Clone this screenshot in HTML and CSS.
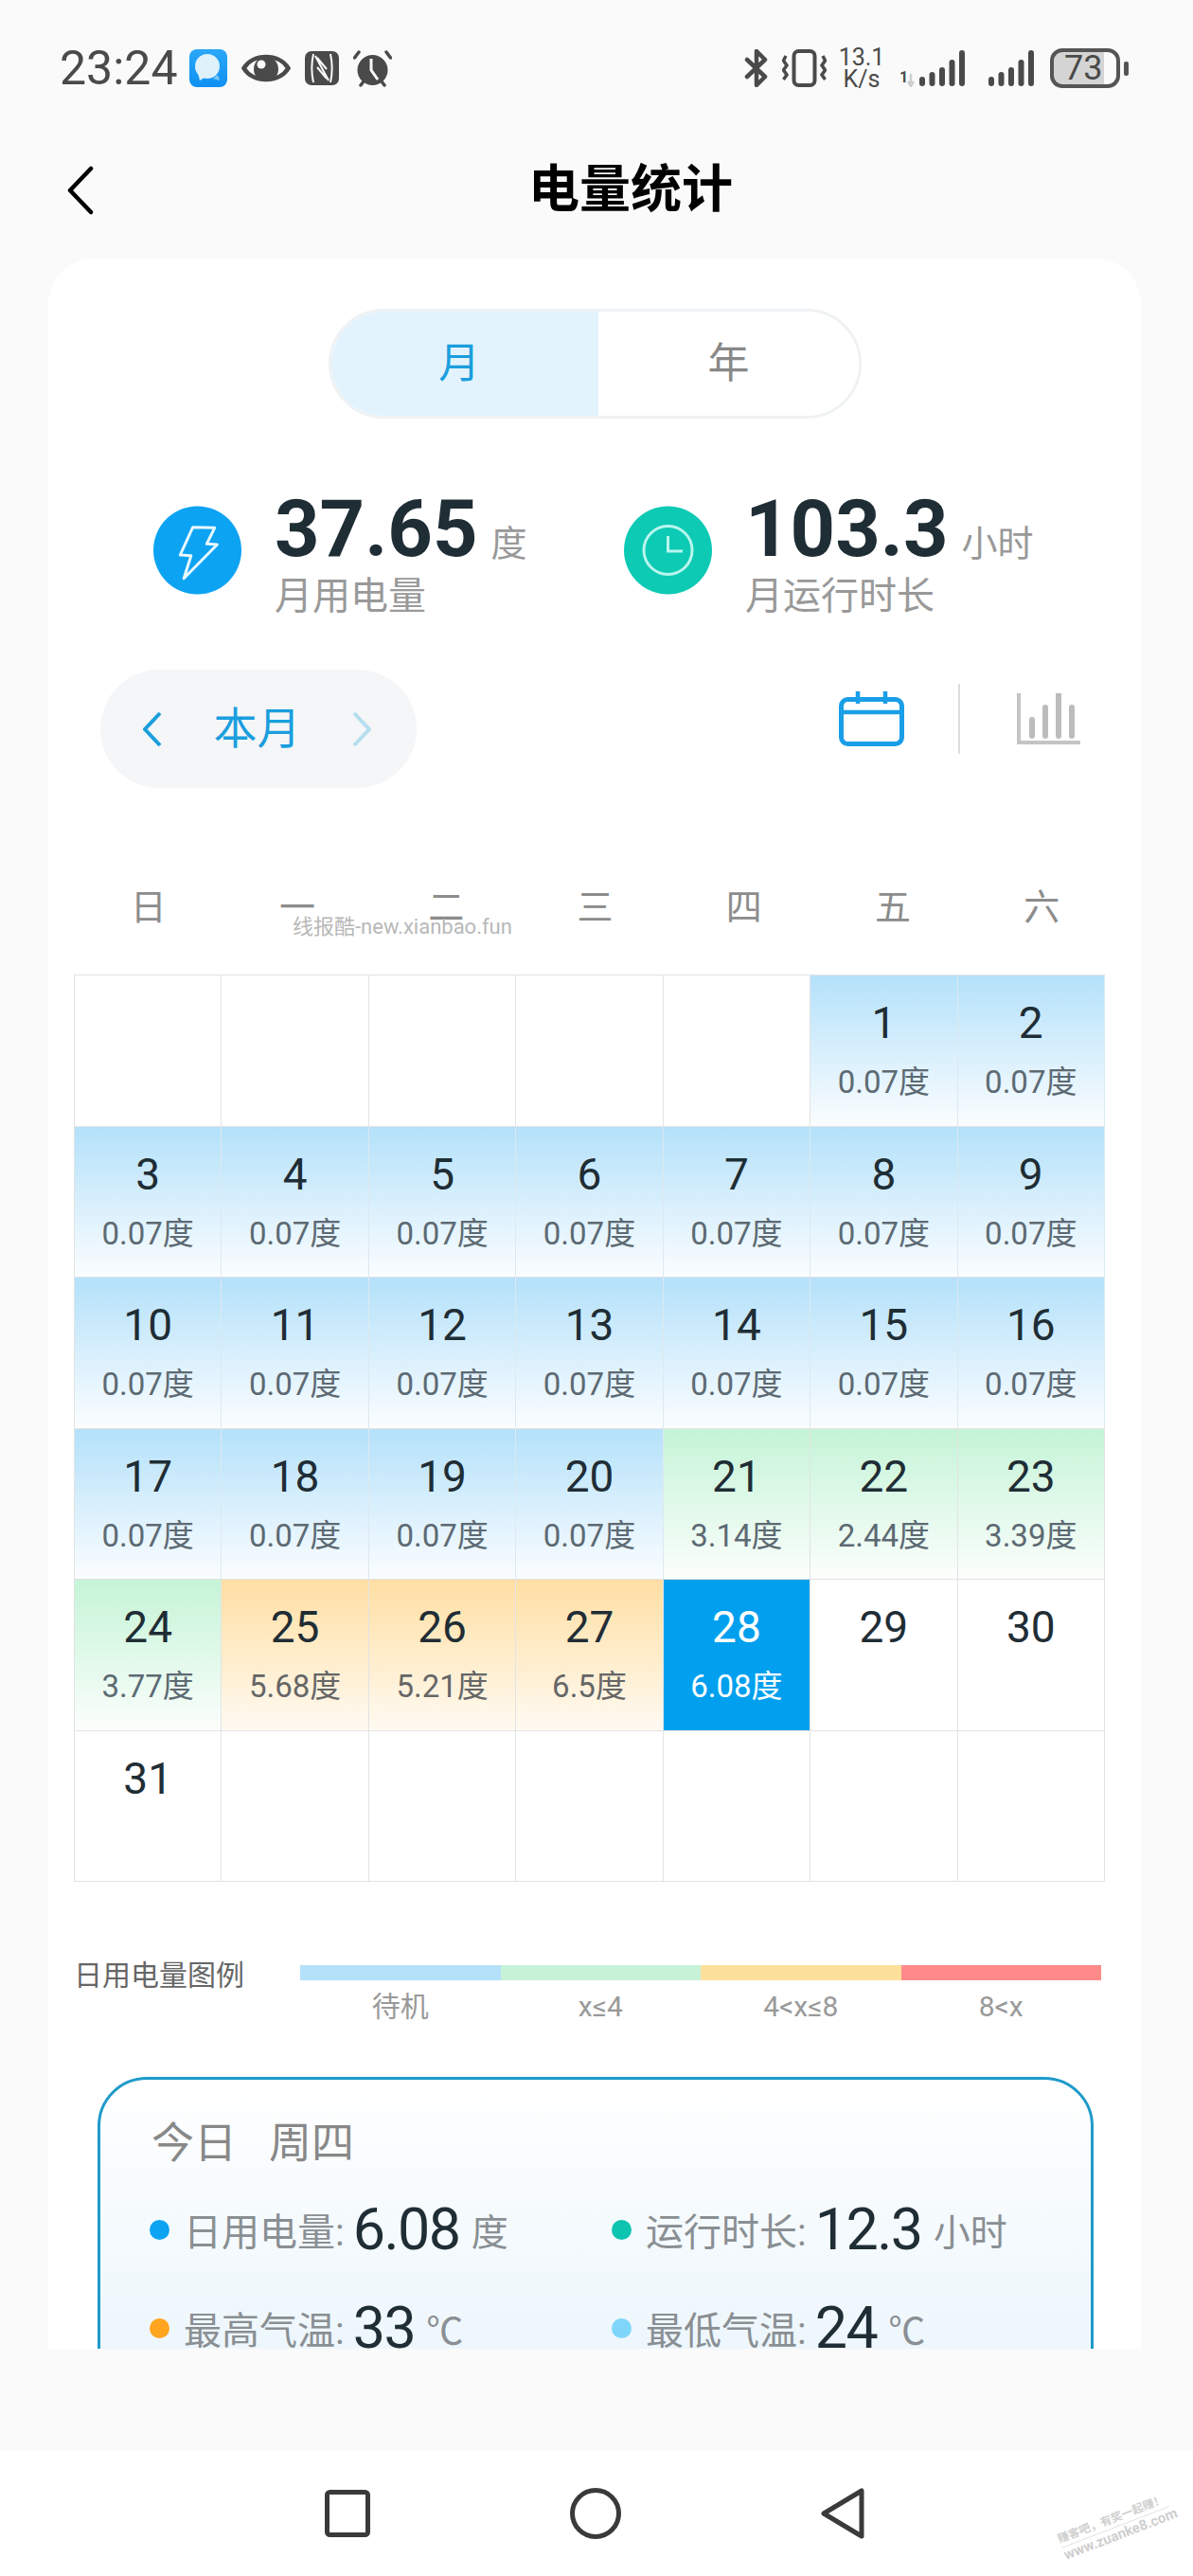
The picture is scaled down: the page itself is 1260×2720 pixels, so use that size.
FILE: index.html
```html
<!DOCTYPE html>
<html lang="zh-CN">
<head>
  <meta charset="utf-8">
  <title>电量统计</title>
  <link rel="stylesheet" href="styles.css">
</head>
<body>
<div class="page">

  <div class="status">
    <div class="status-left">
      <span class="time">23:24</span>
      <svg class="ic" width="40" height="40" viewBox="0 0 40 40">
        <defs>
          <linearGradient id="msgBg" x1="0" y1="0" x2="0" y2="1">
            <stop offset="0" stop-color="#2aa8f8"/>
            <stop offset="1" stop-color="#0e90f2"/>
          </linearGradient>
        </defs>
        <rect width="40" height="40" rx="8" fill="url(#msgBg)"/>
        <circle cx="19" cy="18" r="13" fill="#dff1fb"/>
        <path d="M9 25l2 8 8-5z" fill="#dff1fb"/>
        <path d="M30 27l2 6-7-2z" fill="#7cc8f8"/>
      </svg>
      <svg class="ic" width="52" height="36" viewBox="0 0 52 36">
        <path d="M2.500 18C12 2 40 2 49.500 18C40 34 12 34 2.500 18Z" fill="none" stroke="#4a4a4a" stroke-width="4.500"/>
        <circle cx="26" cy="19" r="13" fill="#4a4a4a"/>
        <circle cx="21" cy="14" r="4.500" fill="#fafafa"/>
      </svg>
      <svg class="ic" width="36" height="36" viewBox="0 0 36 36">
        <rect width="36" height="36" rx="7" fill="#4a4a4a"/>
        <path d="M9 3C7 12 7 24 9 33M27 3C29 12 29 24 27 33M11 5L25 31M13 17L23 29M13 7L23 19" fill="none" stroke="#fafafa" stroke-width="2"/>
      </svg>
      <svg class="ic" width="41" height="39" viewBox="0 0 41 39">
        <path d="M1.500 8L6 2M39.500 8L35 2M8 37L11 33M33 37L30 33" stroke="#4a4a4a" stroke-width="3.500" stroke-linecap="round"/>
        <circle cx="20.500" cy="21" r="16" fill="#4a4a4a"/>
        <path d="M19 9V21L26 31" fill="none" stroke="#fafafa" stroke-width="3"/>
      </svg>
    </div>
    <div class="status-right">
      <svg class="ic" width="25" height="40" viewBox="0 0 25 40">
        <path d="M3 11L22 29L13 38V2L22 11L3 29" fill="none" stroke="#4a4a4a" stroke-width="4.500" stroke-linejoin="round" stroke-linecap="round"/>
      </svg>
      <svg class="ic" width="47" height="40" viewBox="0 0 47 40">
        <rect x="12.500" y="2" width="22" height="36" rx="5" fill="none" stroke="#4a4a4a" stroke-width="4"/>
        <path d="M4 7L1.500 12L5 17L1.500 22L5 27L1.500 32M43 7L45.500 12L42 17L45.500 22L42 27L45.500 32" fill="none" stroke="#4a4a4a" stroke-width="3.500"/>
      </svg>
      <div class="speed"><span>13.1</span><span>K/s</span></div>
      <svg class="ic sig-a" width="70" height="40" viewBox="0 0 70 40">
        <text x="0" y="35" class="sig-num">1</text>
        <path d="M12 26V38M9 34L12 39L15 34" fill="none" stroke="#cfcfcf" stroke-width="2.500"/>
        <rect x="21" y="29" width="6" height="10" rx="3" fill="#4a4a4a"/>
        <rect x="31.500" y="24" width="6" height="15" rx="3" fill="#4a4a4a"/>
        <rect x="42" y="19" width="6" height="20" rx="3" fill="#4a4a4a"/>
        <rect x="52.500" y="11" width="6" height="28" rx="3" fill="#4a4a4a"/>
        <rect x="63" y="1" width="6" height="38" rx="3" fill="#4a4a4a"/>
      </svg>
      <svg class="ic sig-b" width="50" height="40" viewBox="0 0 50 40">
        <rect x="1" y="29" width="6" height="10" rx="3" fill="#4a4a4a"/>
        <rect x="11.500" y="24" width="6" height="15" rx="3" fill="#4a4a4a"/>
        <rect x="22" y="19" width="6" height="20" rx="3" fill="#4a4a4a"/>
        <rect x="32.500" y="11" width="6" height="28" rx="3" fill="#4a4a4a"/>
        <rect x="43" y="1" width="6" height="38" rx="3" fill="#4a4a4a"/>
      </svg>
      <div class="battery">73</div>
      <div class="battery-nub"></div>
    </div>
  </div>

  <div class="topbar">
    <svg class="back" width="28" height="52" viewBox="0 0 28 52">
      <path d="M25 3L3 26L25 49" fill="none" stroke="#000" stroke-width="4.500" stroke-linecap="round" stroke-linejoin="round"/>
    </svg>
    <h1 class="title">电量统计</h1>
  </div>

  <div class="card">
    <div class="seg">
      <div class="seg-item seg-on">月</div>
      <div class="seg-item">年</div>
    </div>

    <div class="stats">
      <div class="stat stat-power">
        <svg class="stat-ic" width="93" height="94" viewBox="0 0 93 94">
          <circle cx="46.500" cy="47" r="46.500" fill="#0ca3f3"/>
          <path d="M41.700 22.700L64.700 23.300L56.300 40.300L67.400 41L32.200 76.700L39.800 52.700L28.300 52Z" fill="none" stroke="#e8f8ff" stroke-width="3" stroke-linejoin="round"/>
        </svg>
        <div>
          <div class="stat-val">37.65<span class="stat-unit">度</span></div>
          <div class="stat-label">月用电量</div>
        </div>
      </div>
      <div class="stat">
        <svg class="stat-ic" width="93" height="94" viewBox="0 0 93 94">
          <circle cx="46.500" cy="47" r="46.500" fill="#0ccab4"/>
          <circle cx="46.500" cy="47" r="25.500" fill="none" stroke="#b9f6ee" stroke-width="3"/>
          <path d="M46.500 32V48H62" fill="none" stroke="#b9f6ee" stroke-width="3"/>
        </svg>
        <div>
          <div class="stat-val">103.3<span class="stat-unit">小时</span></div>
          <div class="stat-label">月运行时长</div>
        </div>
      </div>
    </div>

    <div class="tools">
      <div class="pill">
        <svg width="20" height="38" viewBox="0 0 20 38"><path d="M18 2L2 19L18 36" fill="none" stroke="#1a9ede" stroke-width="4"/></svg>
        <span class="pill-text">本月</span>
        <svg width="20" height="38" viewBox="0 0 20 38"><path d="M2 2L18 19L2 36" fill="none" stroke="#b5dfef" stroke-width="4"/></svg>
      </div>
      <div class="views">
        <svg width="69" height="58" viewBox="0 0 69 58">
          <rect x="2.500" y="8.500" width="64" height="47" rx="7" fill="none" stroke="#1a9ee8" stroke-width="5"/>
          <path d="M2 22H67M20 0V13M49 0V13" fill="none" stroke="#1a9ee8" stroke-width="4.500"/>
        </svg>
        <div class="views-line"></div>
        <svg width="67" height="54" viewBox="0 0 67 54">
          <path d="M2 0V52H67" fill="none" stroke="#c4c4c4" stroke-width="4"/>
          <path d="M16 28V45M30 15V45M44 1V45M58 15V45" fill="none" stroke="#bcbcbc" stroke-width="6" stroke-linecap="round"/>
        </svg>
      </div>
    </div>

    <div class="week">
      <span>日</span><span>一</span><span>二</span><span>三</span><span>四</span><span>五</span><span>六</span>
    </div>

    <div class="cal">
      <div class="day"></div><div class="day"></div><div class="day"></div><div class="day"></div><div class="day"></div>
      <div class="day blue"><b>1</b><i>0.07度</i></div>
      <div class="day blue"><b>2</b><i>0.07度</i></div>
      <div class="day blue"><b>3</b><i>0.07度</i></div>
      <div class="day blue"><b>4</b><i>0.07度</i></div>
      <div class="day blue"><b>5</b><i>0.07度</i></div>
      <div class="day blue"><b>6</b><i>0.07度</i></div>
      <div class="day blue"><b>7</b><i>0.07度</i></div>
      <div class="day blue"><b>8</b><i>0.07度</i></div>
      <div class="day blue"><b>9</b><i>0.07度</i></div>
      <div class="day blue"><b>10</b><i>0.07度</i></div>
      <div class="day blue"><b>11</b><i>0.07度</i></div>
      <div class="day blue"><b>12</b><i>0.07度</i></div>
      <div class="day blue"><b>13</b><i>0.07度</i></div>
      <div class="day blue"><b>14</b><i>0.07度</i></div>
      <div class="day blue"><b>15</b><i>0.07度</i></div>
      <div class="day blue"><b>16</b><i>0.07度</i></div>
      <div class="day blue"><b>17</b><i>0.07度</i></div>
      <div class="day blue"><b>18</b><i>0.07度</i></div>
      <div class="day blue"><b>19</b><i>0.07度</i></div>
      <div class="day blue"><b>20</b><i>0.07度</i></div>
      <div class="day green"><b>21</b><i>3.14度</i></div>
      <div class="day green"><b>22</b><i>2.44度</i></div>
      <div class="day green"><b>23</b><i>3.39度</i></div>
      <div class="day green"><b>24</b><i>3.77度</i></div>
      <div class="day orange"><b>25</b><i>5.68度</i></div>
      <div class="day orange"><b>26</b><i>5.21度</i></div>
      <div class="day orange"><b>27</b><i>6.5度</i></div>
      <div class="day today-cell"><b>28</b><i>6.08度</i></div>
      <div class="day"><b>29</b></div>
      <div class="day"><b>30</b></div>
      <div class="day"><b>31</b></div>
      <div class="day"></div><div class="day"></div><div class="day"></div><div class="day"></div><div class="day"></div><div class="day"></div>
    </div>

    <div class="legend">
      <div class="legend-name">日用电量图例</div>
      <div class="legend-scale">
        <div class="legend-part"><div class="legend-bar lg-blue"></div><span>待机</span></div>
        <div class="legend-part"><div class="legend-bar lg-green"></div><span>x≤4</span></div>
        <div class="legend-part"><div class="legend-bar lg-orange"></div><span>4&lt;x≤8</span></div>
        <div class="legend-part"><div class="legend-bar lg-red"></div><span>8&lt;x</span></div>
      </div>
    </div>

    <div class="today">
      <div class="today-title"><span>今日</span><span>周四</span></div>
      <div class="today-grid">
        <div class="row"><span class="dot dot-blue"></span><span class="row-name">日用电量:</span><span class="row-val">6.08</span><span class="row-unit">度</span></div>
        <div class="row"><span class="dot dot-teal"></span><span class="row-name">运行时长:</span><span class="row-val">12.3</span><span class="row-unit">小时</span></div>
        <div class="row"><span class="dot dot-orange"></span><span class="row-name">最高气温:</span><span class="row-val">33</span><span class="row-unit">℃</span></div>
        <div class="row"><span class="dot dot-sky"></span><span class="row-name">最低气温:</span><span class="row-val">24</span><span class="row-unit">℃</span></div>
      </div>
    </div>
  </div>

  <div class="nav">
    <svg width="48" height="50" viewBox="0 0 48 50"><rect x="2.500" y="2.500" width="43" height="45" rx="3" fill="none" stroke="#3a3a3a" stroke-width="5"/></svg>
    <svg width="54" height="54" viewBox="0 0 54 54"><circle cx="27" cy="27" r="24.500" fill="none" stroke="#3a3a3a" stroke-width="5"/></svg>
    <svg width="46" height="54" viewBox="0 0 46 54"><path d="M43 3V51L3 27Z" fill="none" stroke="#3a3a3a" stroke-width="5" stroke-linejoin="round"/></svg>
  </div>

  <div class="mark-top">线报酷-new.xianbao.fun</div>
  <div class="mark-corner"><span class="mark-cn">赚客吧，有奖一起赚！</span><span>www.zuanke8.com</span></div>
</div>
</body>
</html>
```

FILE: styles.css
```css
*{
    box-sizing: border-box;
}
body{
    margin: 0;
    background-color: #fafafa;
    font-family: Roboto, "Noto Sans CJK SC", sans-serif;
}
.page{
    position: relative;
    width: 1260px;
    height: 2720px;
    overflow: hidden;
    display: flex;
    flex-direction: column;
    background-color: #fafafa;
}
.ic{
    flex-shrink: 0;
    display: block;
}

/* status bar */
.status{
    height: 144px;
    display: flex;
    justify-content: space-between;
    align-items: center;
    padding: 0 68px 0 63px;
    color: #4a4a4a;
}
.status-left, .status-right{
    display: flex;
    align-items: center;
}
.status-left .ic{
    margin-left: 15px;
}
.time{
    font-size: 50px;
    line-height: 50px;
    margin-right: -3px;
}
.status-right .ic:nth-child(2){
    margin-left: 15px;
}
.speed{
    display: flex;
    flex-direction: column;
    align-items: center;
    width: 46px;
    margin-left: 14px;
    font-size: 25px;
    line-height: 23px;
}
.sig-a{
    margin-left: 17px;
}
.sig-b{
    margin-left: 23px;
}
.sig-num{
    font-size: 16px;
    font-weight: 700;
    font-family: Roboto, sans-serif;
    fill: #4a4a4a;
}
.battery{
    width: 74px;
    height: 42px;
    margin-left: 16px;
    border: 4px solid #555;
    border-radius: 13px;
    background: linear-gradient(to right, #d4d4d4 80%, transparent 80%);
    font-size: 36px;
    line-height: 34px;
    padding-left: 11px;
}
.battery-nub{
    width: 5px;
    height: 15px;
    margin-left: 4px;
    border-radius: 2px;
    background-color: #555;
}

/* title */
.topbar{
    height: 129px;
    display: flex;
    align-items: center;
    padding: 0 0 15px 71px;
}
.back{
    flex-shrink: 0;
}
.title{
    margin: 0 0 0 459px;
    font-size: 54px;
    line-height: 60px;
    font-weight: 700;
    color: #000;
}

/* white card */
.card{
    width: 1154px;
    height: 2207px;
    margin-left: 51px;
    flex-shrink: 0;
    overflow: hidden;
    background-color: #fff;
    border-radius: 48px 48px 0 0;
}
.seg{
    width: 563px;
    height: 116px;
    margin: 53px 0 0 296px;
    display: flex;
    border: 3px solid #eff2f4;
    border-radius: 58px;
    overflow: hidden;
}
.seg-item{
    flex: 1;
    display: flex;
    align-items: center;
    justify-content: center;
    padding-bottom: 8px;
    font-size: 44px;
    color: #888;
}
.seg-on{
    flex: 0 0 282px;
    padding-right: 12px;
    background-color: #e3f3fd;
    color: #1a9ede;
}
.stats{
    display: flex;
    height: 120px;
    margin: 84px 0 0 111px;
}
.stat{
    display: flex;
    gap: 35px;
}
.stat-power{
    width: 497px;
}
.stat-ic{
    margin-top: 8px;
    flex-shrink: 0;
}
.stat-val{
    height: 61px;
    margin-top: 2px;
    font-size: 83px;
    line-height: 61px;
    font-weight: 700;
    color: #1f2d35;
    white-space: nowrap;
}
.stat-unit{
    margin-left: 14px;
    font-size: 38px;
    font-weight: 400;
    color: #999;
}
.stat-label{
    margin-top: 18px;
    font-size: 40px;
    line-height: 46px;
    color: #999;
}
.tools{
    display: flex;
    justify-content: space-between;
    margin: 61px 64px 0 55px;
    height: 125px;
}
.pill{
    width: 334px;
    height: 125px;
    display: flex;
    align-items: center;
    justify-content: space-between;
    padding: 0 48px 0 45px;
    border-radius: 63px;
    background-color: #f5f6f7;
}
.pill-text{
    padding-bottom: 10px;
    font-size: 46px;
    color: #1a9ede;
}
.views{
    display: flex;
    align-items: flex-start;
    margin-top: 15px;
}
.views svg:first-child{
    margin-top: 8px;
}
.views svg:last-child{
    margin-top: 10px;
}
.views-line{
    width: 2px;
    height: 74px;
    margin: 0 60px 0 57px;
    background-color: #ddd;
}

/* calendar */
.week{
    display: grid;
    grid-template-columns: repeat(7, 1fr);
    width: 1101px;
    height: 46px;
    margin: 103px 0 0 27px;
    text-align: center;
    font-size: 38px;
    line-height: 46px;
    color: #8c8c8c;
}
.cal{
    display: grid;
    grid-template-columns: repeat(7, 1fr);
    grid-auto-rows: 159.5px;
    width: 1089px;
    margin: 48px 0 0 27px;
    border-top: 1px solid #e3e3e3;
    border-left: 1px solid #e3e3e3;
}
.day{
    display: flex;
    flex-direction: column;
    align-items: center;
    border-right: 1px solid #e3e3e3;
    border-bottom: 1px solid #e3e3e3;
    color: #1f2d35;
}
.day b{
    margin-top: 22px;
    font-size: 46px;
    line-height: 56px;
    font-weight: 400;
}
.day i{
    margin-top: 12px;
    font-size: 33px;
    line-height: 46px;
    font-style: normal;
    color: #5d6a73;
}
.blue{
    background: linear-gradient(#b4e1fa, #fbfdff);
    border-right-color: #dce9f0;
}
.green{
    background: linear-gradient(#c5f4d7, #fbfefc);
}
.orange{
    background: linear-gradient(#ffdfa3, #fffaf2);
}
.orange i{
    color: #666;
}
.today-cell{
    background-color: #00a0ee;
    color: #fff;
}
.today-cell i{
    color: #fff;
}

/* legend */
.legend{
    display: flex;
    margin: 83px 0 0 27px;
}
.legend-name{
    width: 239px;
    font-size: 30px;
    line-height: 32px;
    color: #666;
}
.legend-scale{
    display: flex;
    width: 846px;
}
.legend-part{
    flex: 1;
    text-align: center;
    font-size: 30px;
    line-height: 36px;
    color: #999;
}
.legend-bar{
    height: 16px;
    margin: 5px 0 10px;
}
.lg-blue{ background-color: #b5e1fa; }
.lg-green{ background-color: #c8f2d8; }
.lg-orange{ background-color: #fde09b; }
.lg-red{ background-color: #ff8a8a; }

/* today box, cut off by the bottom of the card */
.today{
    width: 1052px;
    height: 340px;
    margin: 56px 0 0 52px;
    padding: 42px 0 0 52px;
    border: 3px solid #1f9ac9;
    border-radius: 52px;
    background: linear-gradient(#fff, #eaf5fc);
}
.today-title{
    display: flex;
    gap: 34px;
    padding-left: 2px;
    font-size: 45px;
    line-height: 52px;
    color: #888;
}
.today-grid{
    display: grid;
    grid-template-columns: 488px 1fr;
    grid-auto-rows: 104px;
    margin-top: 12px;
}
.row{
    display: flex;
    align-items: center;
}
.dot{
    width: 21px;
    height: 21px;
    margin-right: 15px;
    border-radius: 50%;
}
.dot-blue{ background-color: #0ca3f3; }
.dot-teal{ background-color: #0cc4b0; }
.dot-orange{ background-color: #ffa51f; }
.dot-sky{ background-color: #7fd6fb; }
.row-name{
    font-size: 40px;
    color: #8a8f93;
}
.row-val{
    margin-left: 9px;
    font-size: 61px;
    color: #1f2d35;
    letter-spacing: -1.500px;
}
.row-unit{
    margin-left: 12px;
    font-size: 39px;
    color: #8a8f93;
}

/* navigation */
.nav{
    height: 133px;
    margin-top: 107px;
    flex-shrink: 0;
    display: flex;
    align-items: center;
    gap: 211px;
    padding: 0 0 0 343px;
    background-color: #fff;
}

/* watermarks lying over the page */
.mark-top{
    position: absolute;
    left: 309px;
    top: 966px;
    font-size: 22px;
    line-height: 26px;
    color: #b8b8b8;
    white-space: nowrap;
}
.mark-corner{
    position: absolute;
    left: 1117px;
    top: 2651px;
    width: 122px;
    display: flex;
    flex-direction: column;
    font-size: 15px;
    line-height: 17px;
    font-weight: 700;
    color: #cfcfcf;
    white-space: nowrap;
    transform: rotate(-21deg);
}
.mark-cn{
    font-size: 12px;
    border-bottom: 1px solid #dedede;
}
```
